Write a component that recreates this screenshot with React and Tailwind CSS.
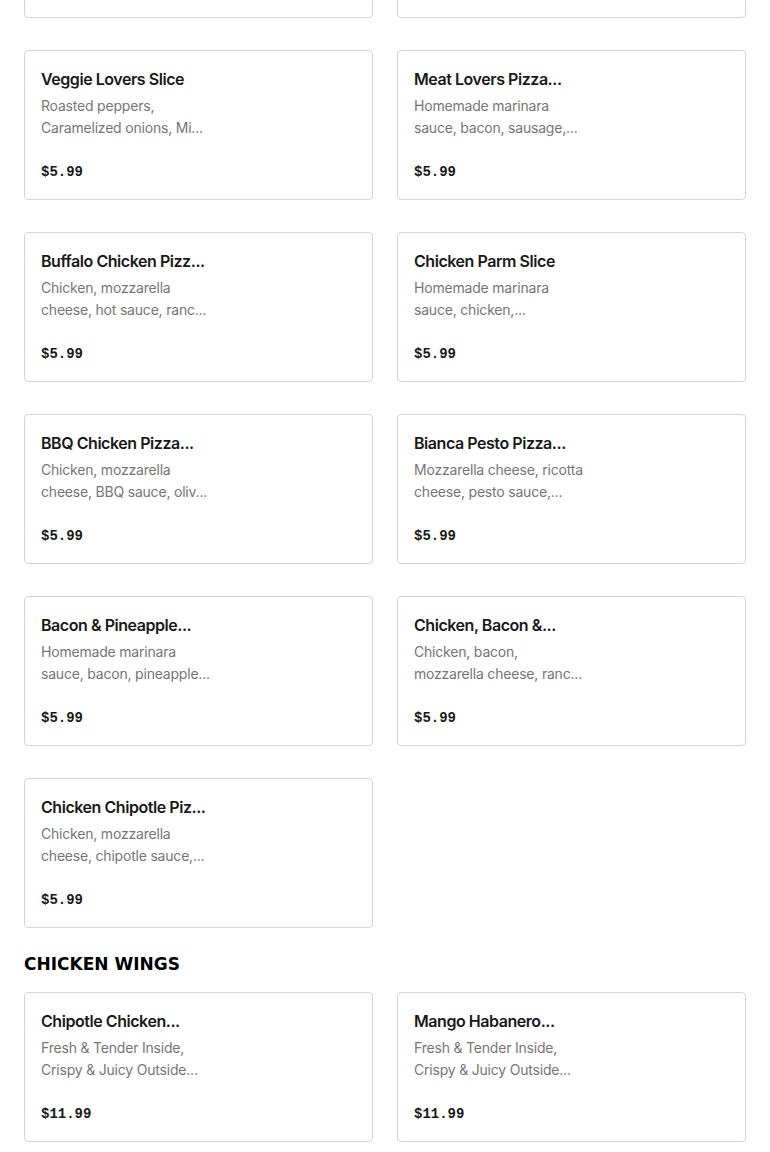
import React from "react";

const pizzas = [
  { t: "Cheese Slice", d: ["Homemade marinara", "sauce, mozzarella..."], p: "$4.99" },
  { t: "Pepperoni Slice", d: ["Homemade marinara", "sauce, pepperoni..."], p: "$4.99" },
  { t: "Veggie Lovers Slice", d: ["Roasted peppers,", "Caramelized onions, Mi..."], p: "$5.99" },
  { t: "Meat Lovers Pizza...", d: ["Homemade marinara", "sauce, bacon, sausage,..."], p: "$5.99" },
  { t: "Buffalo Chicken Pizz...", d: ["Chicken, mozzarella", "cheese, hot sauce, ranc..."], p: "$5.99" },
  { t: "Chicken Parm Slice", d: ["Homemade marinara", "sauce, chicken,..."], p: "$5.99" },
  { t: "BBQ Chicken Pizza...", d: ["Chicken, mozzarella", "cheese, BBQ sauce, oliv..."], p: "$5.99" },
  { t: "Bianca Pesto Pizza...", d: ["Mozzarella cheese, ricotta", "cheese, pesto sauce,..."], p: "$5.99" },
  { t: "Bacon & Pineapple...", d: ["Homemade marinara", "sauce, bacon, pineapple..."], p: "$5.99" },
  { t: "Chicken, Bacon &...", d: ["Chicken, bacon,", "mozzarella cheese, ranc..."], p: "$5.99" },
  { t: "Chicken Chipotle Piz...", d: ["Chicken, mozzarella", "cheese, chipotle sauce,..."], p: "$5.99" },
];

const wings = [
  { t: "Chipotle Chicken...", d: ["Fresh & Tender Inside,", "Crispy & Juicy Outside..."], p: "$11.99" },
  { t: "Mango Habanero...", d: ["Fresh & Tender Inside,", "Crispy & Juicy Outside..."], p: "$11.99" },
];

function Card({ item, hidden }) {
  return (
    <div className="h-[150px] rounded-[4px] border border-[#d4d4d4] bg-white px-4 pt-4">
      <div className={hidden ? "invisible" : ""}>
        <div className="text-[16px] leading-6 font-semibold text-[#191919] whitespace-nowrap tracking-[-0.45px]" style={{ fontFamily: "Inter, 'Liberation Sans', sans-serif" }}>
          {item.t}
        </div>
        <div className="mt-1 text-[14px] leading-[22px] text-[#767676] whitespace-nowrap tracking-[-0.2px]" style={{ fontFamily: "Inter, 'Liberation Sans', sans-serif" }}>
          <div>{item.d[0]}</div>
          <div>{item.d[1]}</div>
        </div>
        <div className="mt-[23px] text-[14px] leading-5 font-bold text-[#191919]" style={{ fontFamily: "'Liberation Mono', monospace" }}>
          {item.p}
        </div>
      </div>
    </div>
  );
}

export default function App() {
  return (
    <div className="min-h-[1152px] bg-white overflow-hidden">
      <div className="mt-[-132px] px-6">
        <div className="grid grid-cols-2 gap-x-6 gap-y-8">
          {pizzas.map((it, i) => (
            <Card key={i} item={it} hidden={i < 2} />
          ))}
        </div>
        <h2
          className="mt-[22px] mb-[14px] text-[17px] leading-7 font-black text-black"
          style={{ fontFamily: "'DejaVu Sans', 'Liberation Sans', sans-serif" }}
        >
          CHICKEN WINGS
        </h2>
        <div className="grid grid-cols-2 gap-x-6 gap-y-8">
          {wings.map((it, i) => (
            <Card key={i} item={it} />
          ))}
        </div>
      </div>
    </div>
  );
}
